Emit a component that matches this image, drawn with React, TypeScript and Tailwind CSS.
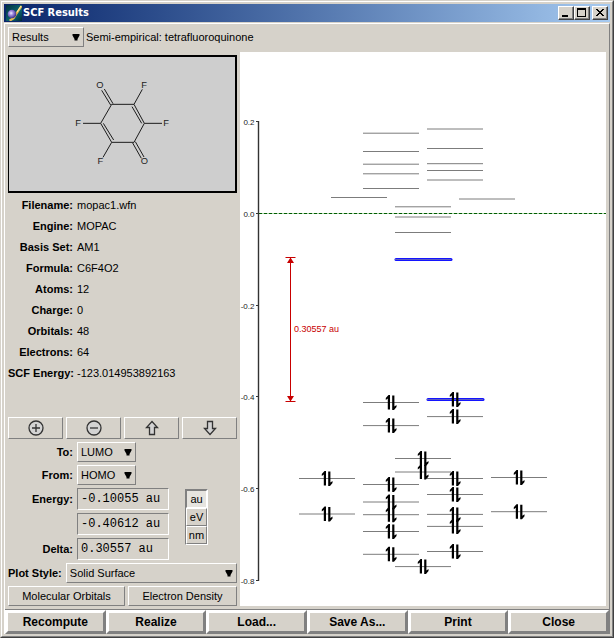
import { useState, type ReactNode } from "react";

const raised = "border border-t-white border-l-white border-r-[#808080] border-b-[#808080]";
const sunken = "border border-t-[#808080] border-l-[#808080] border-r-white border-b-white";

const INFO: [string, string][] = [
  ["Filename:", "mopac1.wfn"],
  ["Engine:", "MOPAC"],
  ["Basis Set:", "AM1"],
  ["Formula:", "C6F4O2"],
  ["Atoms:", "12"],
  ["Charge:", "0"],
  ["Orbitals:", "48"],
  ["Electrons:", "64"],
  ["SCF Energy:", "-123.014953892163"],
];

// Each level is [left edge, height on the plot].
const VIRTUAL: [number, number][] = [
  [123, 81.2], [123, 99.5], [123, 112.2], [123, 121.8], [123, 136.5],
  [91, 145.5], [155, 154.8], [155, 165], [155, 180.5],
  [187, 77], [187, 96.5], [187, 111.7], [187, 118.5], [187, 128], [219, 147],
];

const OCCUPIED: [number, number][] = [
  [123, 350.5], [123, 373.6], [123, 432.5], [123, 450], [123, 462.7], [123, 479.5], [123, 502.3],
  [155, 406.5], [155, 420], [155, 514.6],
  [187, 364.6], [187, 426.5], [187, 442.5], [187, 462.4], [187, 474.4], [187, 499.5],
  [59, 426.5], [59, 462], [251, 425.5], [251, 459.7],
];

const TICKS: [string, number][] = [
  ["0.2", 69.5], ["0.0", 161.5], ["-0.2", 253.5], ["-0.4", 344.5], ["-0.6", 436.5], ["-0.8", 528.5],
];

function Level({ x, y }: { x: number; y: number }) {
  return <line x1={x} x2={x + 56} y1={y} y2={y} stroke="#7c7c7c" />;
}

function Pair({ x, y }: { x: number; y: number }) {
  return (
    <g transform={`translate(${x + 28} ${y})`} fill="#000">
      <path d="M-1-7.5V7H-3.2V-4L-5.2-2.5V-4.5L-2.5-7.500Z" />
      <path d="M1.2-7V7.5H3L5.500 4.500V2.500L3.400 4V-7Z" />
    </g>
  );
}

function Frontier({ y, x }: { x: number; y: number }) {
  return (
    <g>
      <line x1={x + 1} x2={x + 56} y1={y} y2={y} stroke="#1414ff" strokeWidth="3" strokeLinecap="round" />
      <line x1={x} x2={x + 56} y1={y} y2={y} stroke="#5c5cc0" />
    </g>
  );
}

function OrbitalPlot() {
  return (
    <svg className="h-full w-full" role="img" aria-label="Orbital energy diagram" fontFamily="'Liberation Sans', Arial, sans-serif">
      <g stroke="#333" fill="none">
        <path d="M18.5 69V529" strokeWidth="1.4" />
        {TICKS.map(([t, y]) => (
          <line key={t} x1="16" x2="19" y1={y} y2={y} />
        ))}
      </g>
      {TICKS.map(([t, y]) => (
        <text key={t} x="14.5" y={y + 3} fontSize="8" textAnchor="end" fill="#222">{t}</text>
      ))}
      {VIRTUAL.map(([x, y]) => <Level key={`${x}-${y}`} x={x} y={y} />)}
      {OCCUPIED.map(([x, y]) => <Level key={`${x}-${y}`} x={x} y={y} />)}
      <line x1="19" x2="100%" y1="161.5" y2="161.5" stroke="#a8d4a8" />
      <line x1="19" x2="100%" y1="161.5" y2="161.5" stroke="#005c00" strokeDasharray="3 2" />
      <Frontier x={155} y={207.5} />
      <Frontier x={187} y={347.5} />
      {OCCUPIED.map(([x, y]) => <Pair key={`${x}-${y}`} x={x} y={y} />)}
      <Pair x={187} y={347.5} />
      <g stroke="#c80000" fill="#c80000">
        <path d="M45.5 205.5H55.5M45.5 349.5H55.5M50.5 206V349" />
        <path stroke="none" d="M50.5 205.5L54 211H47ZM50.5 349.5L54 344H47Z" />
      </g>
      <text x="54" y="280" fontSize="9" fill="#c80000">0.30557 au</text>
    </svg>
  );
}

const ATOMS: [string, number, number][] = [
  ["O", 300, 104], ["F", 432, 104], ["F", 234, 218], ["F", 498, 218], ["F", 301, 332], ["O", 433, 332],
];

function Molecule() {
  return (
    <svg viewBox="27 21 678 402" className="h-[134px] w-full" role="img" aria-label="Tetrafluoroquinone structure">
      <path
        fill="none"
        stroke="#1c1c1c"
        strokeWidth="3"
        d="M335 163H402L433 220L402 277H335L302 220ZM396 170L425 220M341 270L310 220M402 163L427 118M302 220H249M433 220H486M335 277L309 322M332 165L305 121M339 161L313 117M398 279L424 325M406 275L432 321"
      />
      {ATOMS.map(([t, x, y]) => (
        <text key={`${x}${y}`} x={x} y={y + 10} fontSize="28" textAnchor="middle" fill="#222" fontFamily="'Liberation Sans', Arial, sans-serif">{t}</text>
      ))}
    </svg>
  );
}

function Select({ id, label, options, className }: { id: string; label?: string; options: string[]; className: string }) {
  return (
    <div className={`relative h-5 ${className}`}>
      <select id={id} aria-label={label} className={`h-full w-full appearance-none bg-[#d6d2ca] pl-[3px] ${raised}`}>
        {options.map((o) => <option key={o}>{o}</option>)}
      </select>
      <svg viewBox="0 0 8 7" className="pointer-events-none absolute top-[7px] right-1 h-[7px] w-2">
        <path d="M0.500 0H7.500V1.500L5.500 5V6.500H2.500V5L0.500 1.500Z" />
      </svg>
    </div>
  );
}

function Field({ id, value, label }: { id: string; value: string; label?: string }) {
  return (
    <input
      id={id}
      readOnly
      value={value}
      aria-label={label}
      className={`h-[22px] w-[92px] bg-[#d6d2ca] pl-[3px] font-['Liberation_Mono','Courier_New',monospace] text-[12px] ${sunken}`}
    />
  );
}

function IconButton({ label, children }: { label: string; children: ReactNode }) {
  return (
    <button aria-label={label} className={`flex h-[22px] items-center justify-center ${raised}`}>
      <svg viewBox="0 0 16 16" className="size-4" fill="#d3d3d3" stroke="#333" strokeWidth="1.3">{children}</svg>
    </button>
  );
}

function CaptionButton({ label, children }: { label: string; children: ReactNode }) {
  return (
    <button
      aria-label={label}
      className="h-[14px] w-4 border border-t-white border-l-white border-r-[#404040] border-b-[#404040] bg-[#d6d2ca] shadow-[inset_-1px_-1px_#808080]"
    >
      <svg viewBox="0 0 14 12" className="h-3 w-[14px]" shapeRendering="crispEdges">{children}</svg>
    </button>
  );
}

function AppIcon() {
  return (
    <svg viewBox="0 0 16 16" className="size-4" aria-hidden="true">
      <defs>
        <linearGradient id="sea" x1="0" y1="0" x2="1" y2="1">
          <stop offset="0" stopColor="#04303c" />
          <stop offset="0.6" stopColor="#0a6470" />
          <stop offset="1" stopColor="#042838" />
        </linearGradient>
        <radialGradient id="ball" cx="0.4" cy="0.4" r="0.6">
          <stop offset="0" stopColor="#f4eeff" />
          <stop offset="0.4" stopColor="#a08ce0" />
          <stop offset="1" stopColor="#40308c" />
        </radialGradient>
      </defs>
      <rect width="16" height="16" fill="url(#sea)" />
      <path d="M15.5 1L9.5 10Q8 14 3.500 15.500" fill="none" stroke="#e8b850" strokeWidth="2.200" />
      <path d="M15 1L11 7" stroke="#fff0b0" />
      <circle cx="6" cy="9" r="4.300" fill="url(#ball)" />
    </svg>
  );
}

export default function App() {
  const [unit, setUnit] = useState("au");
  return (
    <div className="flex min-h-screen flex-col border border-t-[#d6d2ca] border-r-[#404040] border-b-[#404040] border-l-[#d6d2ca] bg-[#d6d2ca] font-['Liberation_Sans',Arial,sans-serif] text-[11px] text-black">
      <div className="flex flex-1 flex-col border border-t-white border-r-[#808080] border-b-[#808080] border-l-white p-[2px]">
        <header className="flex h-[18px] items-center bg-linear-to-r from-[#0a246a] to-[#a6caf0] px-[2px]">
          <AppIcon />
          <h1 className="ml-px flex-1 font-['DejaVu_Sans_Condensed','DejaVu_Sans',sans-serif] text-[11px] font-bold text-white">SCF Results</h1>
          <CaptionButton label="Minimize"><rect x="3" y="8" width="6" height="2" /></CaptionButton>
          <CaptionButton label="Maximize"><path d="M2 1H11V10H2ZM3 3V9H10V3Z" fillRule="evenodd" /></CaptionButton>
          <span className="w-[2px]" />
          <CaptionButton label="Close window">
            <path d="M3 2h2v1h1v1h2v-1h1v-1h2v1h-1v1h-1v1h-1v1h1v1h1v1h1v1h-2v-1h-1v-1h-2v1h-1v1h-2v-1h1v-1h1v-1h1v-1h-1v-1h-1v-1h-1z" />
          </CaptionButton>
        </header>

        <div className="mt-px flex flex-1 flex-col border-t border-r border-l border-t-white border-r-[#808080] border-l-white">
          <div className="flex items-center gap-[2px] px-[3px] pt-[3px]">
            <Select id="menu" label="Results menu" options={["Results"]} className="w-[76px]" />
            <p>Semi-empirical: tetrafluoroquinone</p>
          </div>

          <main className="mt-[5px] flex flex-1 gap-[3px] px-[3px] pb-[3px]">
            <section className="flex w-[229px] flex-col gap-[3px] pt-[3px]">
              <div className="border-2 border-l border-black bg-[#cecece]">
                <Molecule />
              </div>

              <dl className="-mt-px grid grid-cols-[65px_1fr] gap-x-1 leading-[21px]">
                {INFO.map(([k, v]) => (
                  <div key={k} className="contents">
                    <dt className="text-right font-bold whitespace-nowrap">{k}</dt>
                    <dd>{v}</dd>
                  </div>
                ))}
              </dl>

              <div className="mt-auto grid grid-cols-4 gap-[3px]">
                <IconButton label="Zoom in"><circle cx="8" cy="8" r="7" /><path d="M8 4V12M4 8H12" /></IconButton>
                <IconButton label="Zoom out"><circle cx="8" cy="8" r="7" /><path d="M4 8H12" /></IconButton>
                <IconButton label="Move up"><path d="M8 1.500L13.500 7.500H10.500V14.500H5.500V7.500H2.500Z" /></IconButton>
                <IconButton label="Move down"><path d="M8 14.500L13.500 8.500H10.500V1.500H5.500V8.500H2.500Z" /></IconButton>
              </div>

              <div className="grid grid-cols-[65px_1fr] items-center gap-x-1 gap-y-[3px]">
                <label htmlFor="to" className="text-right font-bold">To:</label>
                <Select id="to" options={["LUMO"]} className="w-[59px]" />
                <label htmlFor="from" className="text-right font-bold">From:</label>
                <Select id="from" options={["HOMO"]} className="w-[59px]" />
              </div>

              <div className="flex items-start gap-4">
                <div className="grid grid-cols-[65px_92px] items-center gap-x-1 gap-y-[3px]">
                  <label htmlFor="upper" className="text-right font-bold">Energy:</label>
                  <Field id="upper" value="-0.10055 au" />
                  <span />
                  <Field id="lower" value="-0.40612 au" label="Lower energy" />
                  <label htmlFor="delta" className="text-right font-bold">Delta:</label>
                  <Field id="delta" value="0.30557 au" />
                </div>
                <fieldset aria-label="Energy unit" className={`mt-px w-[23px] ${sunken}`}>
                  {["au", "eV", "nm"].map((u) => (
                    <label
                      key={u}
                      className={`relative flex h-[18px] items-center justify-center ${unit === u ? `${sunken} bg-[#e6e4df]` : raised}`}
                    >
                      <input
                        type="radio"
                        name="unit"
                        checked={unit === u}
                        onChange={() => setUnit(u)}
                        className="absolute inset-0 appearance-none"
                      />
                      {u}
                    </label>
                  ))}
                </fieldset>
              </div>

              <div className="flex items-center gap-1">
                <label htmlFor="style" className="font-bold whitespace-nowrap">Plot Style:</label>
                <Select id="style" options={["Solid Surface"]} className="flex-1" />
              </div>

              <div className="flex gap-[3px]">
                <button className={`h-5 w-[117px] ${raised}`}>Molecular Orbitals</button>
                <button className={`h-5 flex-1 ${raised}`}>Electron Density</button>
              </div>
            </section>

            <section className="flex-1 bg-white">
              <OrbitalPlot />
            </section>
          </main>

          <footer className="grid grid-cols-6 border-t border-t-[#808080]">
            {["Recompute", "Realize", "Load...", "Save As...", "Print", "Close"].map((t) => (
              <button key={t} className="h-6 border-3 border-t-white border-r-[#808080] border-b-[#808080] border-l-white text-[12px] leading-none font-bold">
                {t}
              </button>
            ))}
          </footer>
        </div>
      </div>
    </div>
  );
}
